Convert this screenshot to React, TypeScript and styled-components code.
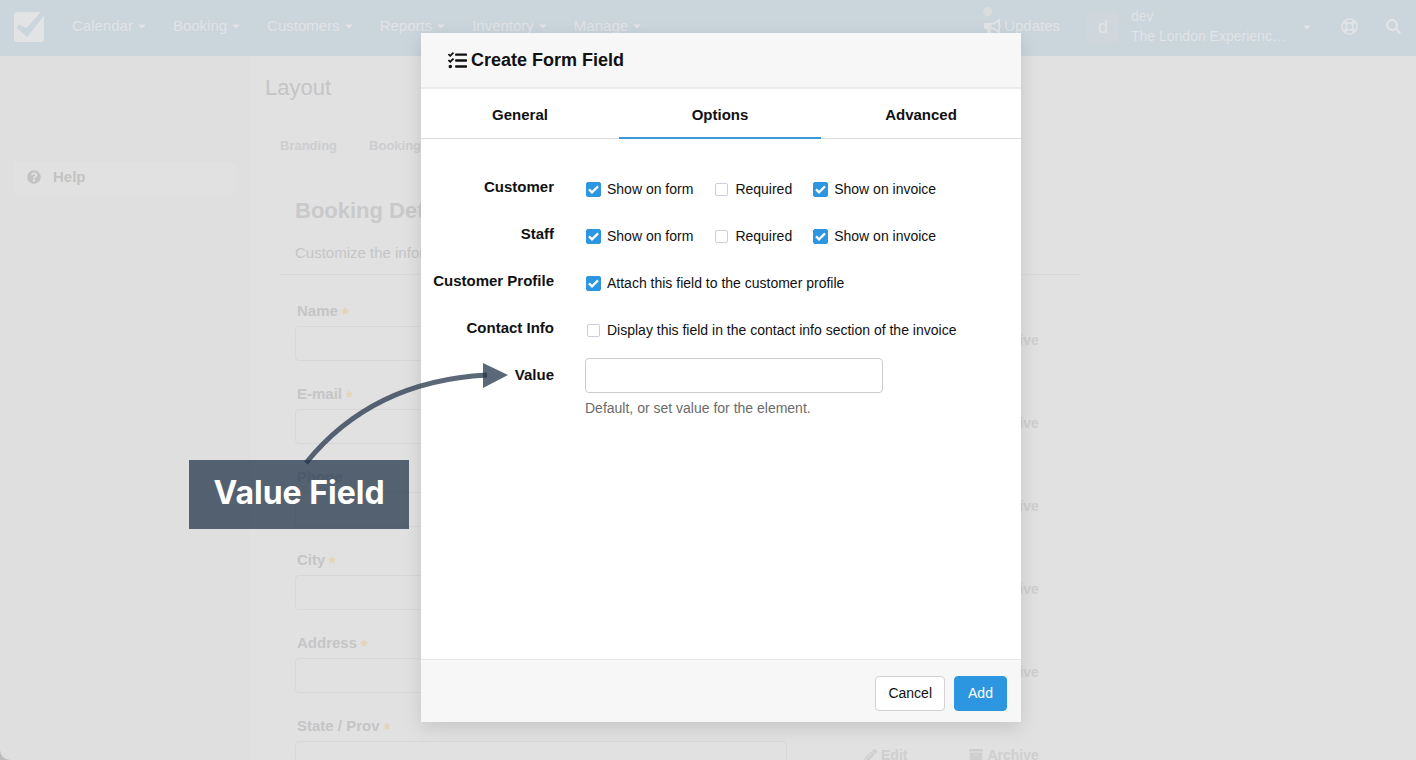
import React from "react";
import styled, { createGlobalStyle } from "styled-components";
import {
  FaArchive,
  FaBullhorn,
  FaCaretDown,
  FaPencilAlt,
  FaQuestionCircle,
  FaRegLifeRing,
  FaSearch,
  FaStar,
  FaTasks,
} from "react-icons/fa";

const GlobalStyle = createGlobalStyle`
  *, *::before, *::after { box-sizing: border-box; }
  body {
    margin: 0;
    background: #bcbcbc;
    color: #111;
    font: 15px/20px "Liberation Sans", Arial, sans-serif;
  }
  button, input { font: inherit; }
  h1, h2, h3, p { margin: 0; }
`;

const Screen = styled.div`
  position: relative;
  height: 100vh;
  overflow: hidden;
`;

const Page = styled.div`
  display: flex;
  flex-direction: column;
  height: 100%;
  overflow: hidden;
  border-radius: 0 0 0 10px;
  background: #dfdfdf;
`;

const NavBar = styled.header`
  display: flex;
  align-items: center;
  flex: none;
  height: 56px;
  padding: 0 15px 2px 14px;
  background: #cad5dc;
  color: #e2e3e4;
`;

const Logo = styled.svg`
  width: 30px;
  height: 30px;
  margin-right: 28px;
`;

const Menu = styled.nav`
  display: flex;
  flex: 1;
  gap: 25px;
`;

const MenuLink = styled.a`
  display: flex;
  align-items: center;
  gap: 3px;
  padding-bottom: 2px;
  color: inherit;
  text-decoration: none;
`;

const Updates = styled(MenuLink)`
  position: relative;
  margin-right: 27px;
`;

const Dot = styled.span`
  position: absolute;
  top: -9px;
  left: -1px;
  width: 9px;
  height: 9px;
  border-radius: 50%;
  background: #dcdcdc;
`;

const Account = styled.button`
  display: flex;
  align-items: center;
  gap: 12px;
  padding: 0;
  border: 0;
  background: none;
  color: inherit;
  text-align: left;
`;

const Avatar = styled.span`
  width: 32px;
  height: 32px;
  border-radius: 4px;
  background: #d0d7dc;
  font-size: 18px;
  line-height: 32px;
  text-align: center;
`;

const AccountName = styled.span`
  width: 158px;
  padding-bottom: 2px;
  font-size: 14px;
  white-space: nowrap;
`;

const IconButton = styled.button`
  display: flex;
  margin-left: 28px;
  padding: 0 0 2px;
  border: 0;
  background: none;
  color: inherit;
`;

const Body = styled.div`
  display: flex;
  flex: 1;
  min-height: 0;
`;

const Sidebar = styled.aside`
  flex: none;
  width: 250px;
  padding: 106px 14px 0;
`;

const HelpLink = styled.a`
  display: flex;
  align-items: center;
  gap: 12px;
  height: 31px;
  padding: 0 13px 2px;
  border-radius: 3px;
  background: #e1e1e1;
  color: #c3c3c3;
  font-weight: bold;
  text-decoration: none;
`;

const Main = styled.main`
  flex: 1;
  overflow: hidden;
  padding: 18px 15px 0;
  background: #e1e1e1;
  color: #c5c5c7;
`;

const PageTitle = styled.h1`
  font-size: 22px;
  font-weight: normal;
  line-height: 28px;
`;

const SubTabs = styled.nav`
  display: flex;
  gap: 32px;
  padding: 34px 15px 0;
`;

const SubTab = styled.a`
  color: #cdced0;
  font-size: 13px;
  font-weight: bold;
  text-decoration: none;
`;

const Section = styled.section`
  max-width: 815px;
  padding: 41px 0 0 15px;
`;

const SectionHead = styled.div`
  padding: 0 15px 11px;
  border-bottom: 1px solid #d9d9d9;
`;

const SectionTitle = styled.h2`
  margin-bottom: 18px;
  color: #c9c9cc;
  font-size: 22px;
  line-height: 28px;
`;

const Fields = styled.div`
  display: flex;
  flex-direction: column;
  gap: 23px;
  padding: 26px 15px 0;
`;

const FieldRow = styled.div`
  display: flex;
  align-items: flex-end;
`;

const FieldBox = styled.label`
  display: flex;
  flex-direction: column;
  flex: none;
  gap: 5px;
  width: 492px;
  font-weight: bold;
`;

const FieldLabel = styled.span`
  display: flex;
  align-items: center;
  gap: 3px;
  height: 20px;
  padding-left: 2px;

  svg { color: #e4d5b9; }
`;

const MutedInput = styled.input`
  width: 100%;
  height: 35px;
  border: 1px solid #d8d8d8;
  border-radius: 4px;
  background: transparent;
`;

const RowAction = styled.a`
  display: flex;
  align-items: center;
  gap: 4px;
  height: 20px;
  margin: 0 0 11px 77px;
  color: #cfcfcf;
  font-size: 14px;
  font-weight: bold;
  text-decoration: none;

  & + & { margin-left: 62px; }
`;

const Backdrop = styled.div`
  position: absolute;
  inset: 0;
  display: flex;
  justify-content: center;
  padding: 33px 0 38px 26px;
`;

const Dialog = styled.form`
  position: relative;
  display: flex;
  flex-direction: column;
  width: 600px;
  background: #fff;
  box-shadow: 0 6px 18px rgba(0, 0, 0, 0.12);
`;

const DialogHead = styled.header`
  display: flex;
  align-items: center;
  gap: 4px;
  height: 56px;
  padding: 0 27px;
  border-bottom: 2px solid #ececec;
  background: #f7f7f7;
`;

const DialogTitle = styled.h2`
  font-size: 18px;
  line-height: 24px;
`;

const Tabs = styled.div`
  display: grid;
  grid-template-columns: 99fr 101fr 100fr;
  height: 50px;
  border-bottom: 1px solid #dcdcdc;
`;

const Tab = styled.button<{ $active?: boolean }>`
  height: 50px;
  padding: 4px 0 0;
  border: 0;
  border-bottom: 2px solid ${(p) => (p.$active ? "#3a9ae0" : "transparent")};
  background: none;
  color: #111;
  font-weight: bold;
`;

const DialogBody = styled.div`
  flex: 1;
  padding-top: 31px;
`;

const FormRow = styled.div`
  display: grid;
  grid-template-columns: 133px 1fr;
  column-gap: 31px;
  align-items: start;
  min-height: 47px;
`;

const RowTitle = styled.label`
  padding-top: 7px;
  font-weight: bold;
  text-align: right;
`;

const Options = styled.div`
  display: flex;
  align-items: center;
  gap: 21px;
  padding: 9px 0 0 1px;
`;

const Check = styled.label`
  display: flex;
  align-items: center;
  gap: 6px;
  font-size: 14px;
`;

const CheckBox = styled.input`
  appearance: none;
  width: 13px;
  height: 13px;
  margin: 1px;
  border: 1px solid #cfcddd;
  border-radius: 2px;
  background: #fff;

  &:checked {
    width: 15px;
    height: 15px;
    margin: 0;
    border-color: #2d96e0;
    background: #2d96e0
      url("data:image/svg+xml,%3Csvg xmlns='http://www.w3.org/2000/svg' viewBox='0 0 13 13'%3E%3Cpath d='M2 6.4l3 3 6-6' fill='none' stroke='white' stroke-width='2.2'/%3E%3C/svg%3E");
  }
`;

const ValueCell = styled.div`
  display: flex;
  flex-direction: column;
  gap: 5px;
  width: 298px;
`;

const ValueInput = styled.input`
  height: 35px;
  padding: 0 12px;
  border: 1px solid #ccc;
  border-radius: 4px;
`;

const Hint = styled.p`
  color: #6b6b6b;
  font-size: 14px;
`;

const DialogFoot = styled.footer`
  display: flex;
  align-items: center;
  justify-content: flex-end;
  gap: 9px;
  height: 63px;
  padding: 4px 14px 0;
  border-top: 1px solid #e6e6e6;
  background: #f7f7f7;
`;

const Button = styled.button<{ $primary?: boolean }>`
  min-width: 53px;
  height: 35px;
  padding: 0 12px;
  border: 1px solid ${(p) => (p.$primary ? "#2d96e0" : "#d2d2d2")};
  border-radius: 4px;
  background: ${(p) => (p.$primary ? "#2d96e0" : "#fff")};
  color: ${(p) => (p.$primary ? "#fff" : "#111")};
  font-size: 14px;
`;

const Callout = styled.div`
  position: absolute;
  top: 427px;
  left: -232px;
  width: 220px;
  height: 69px;
  background: rgba(36, 53, 75, 0.75);
  color: #fff;
  font: bold 32px/66px Inter, "Open Sans", sans-serif;
  text-align: center;
`;

const Arrow = styled.svg`
  position: absolute;
  top: 327px;
  left: -121px;
  width: 210px;
  height: 110px;
  pointer-events: none;
`;

const menus = ["Calendar", "Booking", "Customers", "Reports", "Inventory", "Manage"];

const fields = [
  { label: "Name", required: true },
  { label: "E-mail", required: true },
  { label: "Phone", required: false },
  { label: "City", required: true },
  { label: "Address", required: true },
  { label: "State / Prov", required: true },
];

const audiences = ["Customer", "Staff"];

export default function App() {
  return (
    <>
      <GlobalStyle />
      <Screen>
        <Page>
          <NavBar>
            <Logo viewBox="0 0 30 30" aria-hidden="true">
              <rect width="30" height="30" rx="3" fill="#e2e3e4" />
              <path d="M27 0h3v3.4L13.2 25 2.4 15.4 5 12.6l7.4 3.6z" fill="#cad5dc" />
            </Logo>
            <Menu>
              {menus.map((name) => (
                <MenuLink href="#" key={name}>
                  {name}
                  <FaCaretDown size={12} />
                </MenuLink>
              ))}
            </Menu>
            <Updates href="#">
              <Dot />
              <FaBullhorn size={17} />
              Updates
            </Updates>
            <Account type="button">
              <Avatar>d</Avatar>
              <AccountName>
                dev
                <br />
                The London Experienc…
              </AccountName>
              <FaCaretDown size={12} />
            </Account>
            <IconButton type="button" aria-label="Support">
              <FaRegLifeRing size={17} />
            </IconButton>
            <IconButton type="button" aria-label="Search">
              <FaSearch size={15} />
            </IconButton>
          </NavBar>
          <Body>
            <Sidebar>
              <HelpLink href="#">
                <FaQuestionCircle size={14} />
                Help
              </HelpLink>
            </Sidebar>
            <Main>
              <PageTitle>Layout</PageTitle>
              <SubTabs>
                <SubTab href="#">Branding</SubTab>
                <SubTab href="#">Booking</SubTab>
              </SubTabs>
              <Section>
                <SectionHead>
                  <SectionTitle>Booking Details</SectionTitle>
                  <p>Customize the information</p>
                </SectionHead>
                <Fields>
                  {fields.map((field) => (
                    <FieldRow key={field.label}>
                      <FieldBox>
                        <FieldLabel>
                          {field.label}
                          {field.required && <FaStar size={8} />}
                        </FieldLabel>
                        <MutedInput type="text" />
                      </FieldBox>
                      <RowAction href="#">
                        <FaPencilAlt size={13} />
                        Edit
                      </RowAction>
                      <RowAction href="#">
                        <FaArchive size={14} />
                        Archive
                      </RowAction>
                    </FieldRow>
                  ))}
                </Fields>
              </Section>
            </Main>
          </Body>
        </Page>

        <Backdrop>
          <Dialog role="dialog" aria-labelledby="dialog-title">
            <DialogHead>
              <FaTasks size={19} />
              <DialogTitle id="dialog-title">Create Form Field</DialogTitle>
            </DialogHead>
            <Tabs role="tablist">
              <Tab type="button" role="tab">General</Tab>
              <Tab type="button" role="tab" aria-selected $active>Options</Tab>
              <Tab type="button" role="tab">Advanced</Tab>
            </Tabs>
            <DialogBody>
              {audiences.map((name) => (
                <FormRow key={name}>
                  <RowTitle as="span">{name}</RowTitle>
                  <Options>
                    <Check>
                      <CheckBox type="checkbox" defaultChecked />
                      Show on form
                    </Check>
                    <Check>
                      <CheckBox type="checkbox" />
                      Required
                    </Check>
                    <Check>
                      <CheckBox type="checkbox" defaultChecked />
                      Show on invoice
                    </Check>
                  </Options>
                </FormRow>
              ))}
              <FormRow>
                <RowTitle as="span">Customer Profile</RowTitle>
                <Options>
                  <Check>
                    <CheckBox type="checkbox" defaultChecked />
                    Attach this field to the customer profile
                  </Check>
                </Options>
              </FormRow>
              <FormRow>
                <RowTitle as="span">Contact Info</RowTitle>
                <Options>
                  <Check>
                    <CheckBox type="checkbox" />
                    Display this field in the contact info section of the invoice
                  </Check>
                </Options>
              </FormRow>
              <FormRow>
                <RowTitle htmlFor="value">Value</RowTitle>
                <ValueCell>
                  <ValueInput id="value" type="text" />
                  <Hint>Default, or set value for the element.</Hint>
                </ValueCell>
              </FormRow>
            </DialogBody>
            <DialogFoot>
              <Button type="button">Cancel</Button>
              <Button type="button" $primary>Add</Button>
            </DialogFoot>
            <Callout>Value Field</Callout>
            <Arrow viewBox="300 360 210 110" aria-hidden="true">
              <path
                d="M306 463Q372 381 487 375"
                fill="none"
                stroke="rgba(36, 53, 75, 0.75)"
                strokeWidth="5"
              />
              <path d="M483 363l25 12-25 13z" fill="rgba(36, 53, 75, 0.75)" />
            </Arrow>
          </Dialog>
        </Backdrop>
      </Screen>
    </>
  );
}
